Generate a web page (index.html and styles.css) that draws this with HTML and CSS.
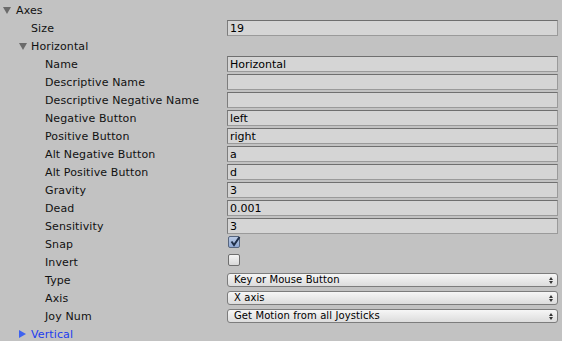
FILE: index.html
```html
<!DOCTYPE html>
<html lang="en">
<head>
  <meta charset="UTF-8" />
  <title>Input Manager</title>
  <link rel="stylesheet" href="styles.css">
</head>
<body>
  <div class="inspector">
    <div class="row lvl0"><span class="label"><span class="fold open"></span>Axes</span></div>
    <div class="row lvl1"><span class="label">Size</span><span class="field">19</span></div>
    <div class="row lvl1"><span class="label"><span class="fold open"></span>Horizontal</span></div>
    <div class="row lvl2"><span class="label">Name</span><span class="field">Horizontal</span></div>
    <div class="row lvl2"><span class="label">Descriptive Name</span><span class="field"></span></div>
    <div class="row lvl2"><span class="label">Descriptive Negative Name</span><span class="field"></span></div>
    <div class="row lvl2"><span class="label">Negative Button</span><span class="field">left</span></div>
    <div class="row lvl2"><span class="label">Positive Button</span><span class="field">right</span></div>
    <div class="row lvl2"><span class="label">Alt Negative Button</span><span class="field">a</span></div>
    <div class="row lvl2"><span class="label">Alt Positive Button</span><span class="field">d</span></div>
    <div class="row lvl2"><span class="label">Gravity</span><span class="field">3</span></div>
    <div class="row lvl2"><span class="label">Dead</span><span class="field">0.001</span></div>
    <div class="row lvl2"><span class="label">Sensitivity</span><span class="field">3</span></div>
    <div class="row lvl2"><span class="label">Snap</span><span class="check checked">
      <svg width="12" height="12" viewBox="0 0 12 12"><path d="M2.5 5.5 L5 9 L10.5 1" fill="none" stroke="#1f2f4a" stroke-width="2"/></svg>
    </span></div>
    <div class="row lvl2"><span class="label">Invert</span><span class="check"></span></div>
    <div class="row lvl2"><span class="label">Type</span><span class="popup">Key or Mouse Button<span class="arrows"></span></span></div>
    <div class="row lvl2"><span class="label">Axis</span><span class="popup">X axis<span class="arrows"></span></span></div>
    <div class="row lvl2"><span class="label">Joy Num</span><span class="popup">Get Motion from all Joysticks<span class="arrows"></span></span></div>
    <div class="row lvl1 link"><span class="label"><span class="fold closed"></span>Vertical</span></div>
  </div>
</body>
</html>
```

FILE: styles.css
```css
body {
  margin: 0;
  background: #c2c2c2;
  font-family: "DejaVu Sans", Verdana, sans-serif;
  font-size: 11px;
  color: #111;
}
.inspector {
  padding-right: 4px;
}
.row {
  height: 18px;
  display: flex;
  align-items: flex-start;
}
.label {
  width: 227px;
  flex: none;
  line-height: 18px;
  padding-top: 2px;
  letter-spacing: 0.12px;
  box-sizing: border-box;
  position: relative;
  white-space: nowrap;
}
.lvl0 .label { padding-left: 16px; }
.lvl1 .label { padding-left: 31px; }
.lvl2 .label { padding-left: 45px; }
.fold {
  position: absolute;
  top: 7px;
  width: 0;
  height: 0;
}
.lvl0 .fold { left: 3px; }
.lvl1 .fold { left: 19px; }
.fold.open {
  border-left: 4px solid transparent;
  border-right: 4px solid transparent;
  border-top: 7px solid #6a6a6a;
}
.fold.closed {
  top: 6px;
  border-top: 4px solid transparent;
  border-bottom: 4px solid transparent;
  border-left: 7px solid #3d62f0;
}
.link .label { color: #1c3cf0; }
.field {
  flex: 1;
  height: 16px;
  margin-top: 2px;
  box-sizing: border-box;
  background: #d5d5d5;
  border: 1px solid #9a9a9a;
  border-top-color: #6f6f6f;
  border-left-color: #7d7d7d;
  padding: 1px 0 0 2px;
  line-height: 14px;
  color: #000;
}
.check {
  width: 12px;
  height: 12px;
  margin: 2px 0 0 1px;
  box-sizing: border-box;
  border: 1px solid #6e6e6e;
  border-radius: 2px;
  background: linear-gradient(#f4f4f4, #d8d8d8);
}
.check svg { display: block; margin: -1px 0 0 0; }
.check.checked {
  background: linear-gradient(#b9c9e4, #8ea7d2);
  border-color: #56657e;
}
.popup {
  flex: 1;
  height: 14px;
  margin-top: 3px;
  box-sizing: border-box;
  border: 1px solid #7c7c7c;
  border-radius: 3px;
  background: linear-gradient(#f6f6f6, #dcdcdc);
  padding-left: 6px;
  line-height: 12px;
  font-size: 10px;
  letter-spacing: 0.1px;
  color: #000;
  position: relative;
}
.arrows {
  position: absolute;
  right: 6px;
  top: 2px;
  width: 0;
  height: 0;
}
.arrows::before, .arrows::after {
  content: "";
  position: absolute;
  left: -2px;
  border-left: 2px solid transparent;
  border-right: 2px solid transparent;
}
.arrows::before { top: 1px; border-bottom: 3px solid #333; }
.arrows::after { top: 5px; border-top: 3px solid #333; }
```
